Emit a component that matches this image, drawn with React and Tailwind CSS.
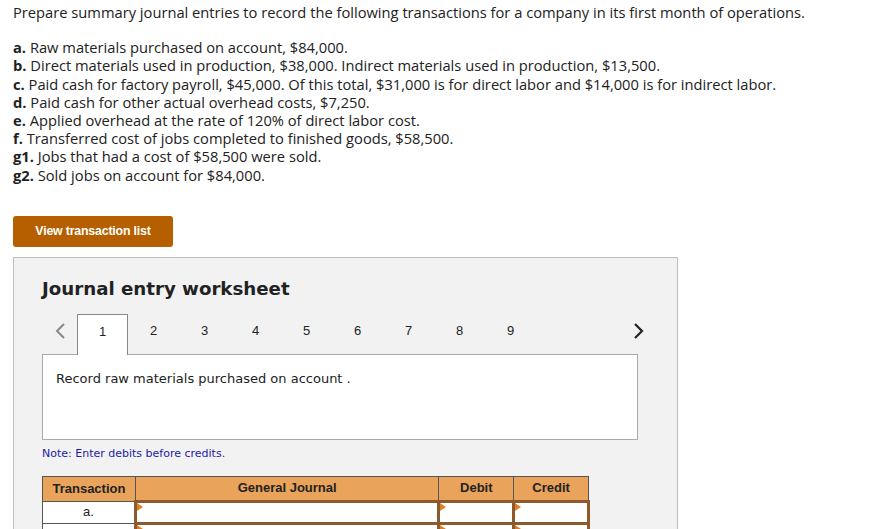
import React from 'react';

const items = [
  ['a.', 'Raw materials purchased on account, $84,000.'],
  ['b.', 'Direct materials used in production, $38,000. Indirect materials used in production, $13,500.'],
  ['c.', 'Paid cash for factory payroll, $45,000. Of this total, $31,000 is for direct labor and $14,000 is for indirect labor.'],
  ['d.', 'Paid cash for other actual overhead costs, $7,250.'],
  ['e.', 'Applied overhead at the rate of 120% of direct labor cost.'],
  ['f.', 'Transferred cost of jobs completed to finished goods, $58,500.'],
  ['g1.', 'Jobs that had a cost of $58,500 were sold.'],
  ['g2.', 'Sold jobs on account for $84,000.'],
];

const tabs = [1, 2, 3, 4, 5, 6, 7, 8, 9];

function InputCell({ className }) {
  return (
    <td className={`relative border-[3px] border-[#8c5a2c] bg-white p-0 ${className}`}>
      <span className="absolute left-0 top-0 h-0 w-0 border-y-[4px] border-l-[6px] border-y-transparent border-l-[#d9822b]" />
    </td>
  );
}

export default function App() {
  return (
    <div className="min-h-screen bg-white text-[#222] font-['Liberation_Sans',Arial,sans-serif]">
      <div className="pl-[13px] pt-[3px] font-['Open_Sans',Arial,sans-serif] text-[14.7px] leading-[18.2px]">
        <p>Prepare summary journal entries to record the following transactions for a company in its first month of operations.</p>
        <ul className="mt-[17px]">
          {items.map(([k, t]) => (
            <li key={k}>
              <span className="font-bold">{k}</span> {t}
            </li>
          ))}
        </ul>
      </div>

      <button className="ml-[13px] mt-[32px] h-[31px] w-[160px] rounded-[3px] bg-[#b55f00] text-[12.4px] font-bold tracking-[-0.2px] text-white">
        View transaction list
      </button>

      <div className="ml-[13px] mt-[10px] w-[665px] border border-[#bdbdbd] bg-[#f2f2f2] pl-[28px] pt-[17px] pb-[40px] font-['DejaVu_Sans',Verdana,sans-serif]">
        <h2 className="text-[18.2px] font-bold text-[#222]">Journal entry worksheet</h2>

        <div className="mt-[12px] flex h-[40px] w-[612px] items-center">
          <div className="flex w-[35px] justify-center pb-[6px]">
            <svg width="12" height="18" viewBox="0 0 12 18" fill="none" stroke="#888" strokeWidth="2">
              <path d="M10 2 L3 9 L10 16" />
            </svg>
          </div>
          {tabs.map((n) => (
            <div
              key={n}
              className={`relative flex h-[40px] w-[51px] items-center justify-center pb-[7px] font-['Liberation_Sans',Arial,sans-serif] text-[13px] text-[#222] ${
                n === 1 ? 'z-10 -mb-px h-[41px] border border-b-0 border-[#888] bg-white' : ''
              }`}
            >
              {n}
            </div>
          ))}
          <div className="ml-auto flex w-[30px] justify-center pb-[6px]">
            <svg width="12" height="18" viewBox="0 0 12 18" fill="none" stroke="#222" strokeWidth="2.2">
              <path d="M2 2 L9 9 L2 16" />
            </svg>
          </div>
        </div>

        <div className="h-[86px] w-[596px] border border-[#aaa] bg-white px-[13px] pt-[14px] text-[13px] text-[#222]">
          Record raw materials purchased on account .
        </div>

        <p className="mt-[6px] text-[11px] text-[#1b1ba6]">Note: Enter debits before credits.</p>

        <table className="mt-[13px] w-[548px] border-collapse font-['Liberation_Sans',Arial,sans-serif] text-[13px]">
          <thead>
            <tr className="h-[25px] bg-[#e9a35b] font-bold text-[#222]">
              <th className="w-[93px] border border-[#555]">Transaction</th>
              <th className="w-[305px] border border-[#555]">General Journal</th>
              <th className="w-[75px] border border-[#555]">Debit</th>
              <th className="w-[75px] border border-[#555]">Credit</th>
            </tr>
          </thead>
          <tbody>
            <tr className="h-[22px]">
              <td className="border border-[#555] bg-white text-center text-[13px]">a.</td>
              <InputCell />
              <InputCell />
              <InputCell />
            </tr>
            <tr className="h-[22px]">
              <td className="border border-[#555] bg-white" />
              <InputCell />
              <InputCell />
              <InputCell />
            </tr>
          </tbody>
        </table>
      </div>
    </div>
  );
}
